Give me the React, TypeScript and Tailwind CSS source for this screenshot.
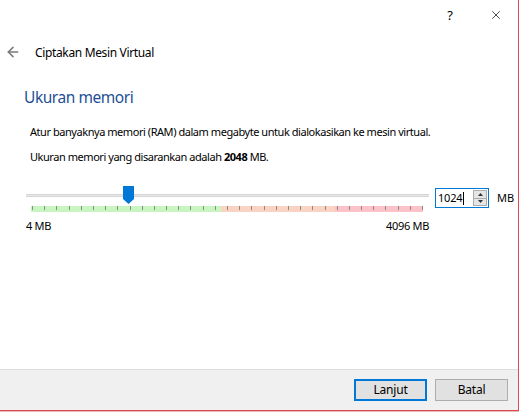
import { ArrowLeft, X } from "lucide-react";

const font = { fontFamily: '"Noto Sans", "Open Sans", sans-serif' };

// slider geometry: bar runs from 4 MB to 4096 MB, one tick every 128 MB
const TICKS = Array.from({ length: 33 }, (_, i) => i);

function MemorySlider() {
  const barWidth = 392;
  const value = 1024;
  const pos = 5 + ((value - 4) / (4096 - 4)) * barWidth;

  return (
    <div className="w-[403px]">
      <div className="relative h-[28px]">
        {/* groove */}
        <div className="absolute left-0 right-0 top-[8px] h-[3px] bg-[#e7e7e7] border-y border-[#d6d6d6]" />
        {/* tick bar */}
        <div className="absolute left-[5px] top-[20px] h-[6px] w-[392px] flex">
          <div className="w-[190px] bg-[#c8f5c0]" />
          <div className="w-[114px] bg-[#fbd3c3]" />
          <div className="flex-1 bg-[#fbc3c7]" />
        </div>
        {TICKS.map((i) => (
          <div
            key={i}
            className="absolute top-[20px] h-[4px] w-px bg-[#8a8a8a]"
            style={{ left: 6 + (i * (barWidth - 2)) / 32 }}
          />
        ))}
        {/* handle */}
        <svg
          className="absolute top-0"
          style={{ left: pos - 5.5 }}
          width="11"
          height="18"
          viewBox="0 0 11 18"
        >
          <path d="M0 0 H11 V13 L5.5 18 L0 13 Z" fill="#0078d7" />
        </svg>
      </div>
      <div className="flex justify-between text-[11px] leading-[14px] tracking-[-0.3px] text-black mt-[5px]">
        <span>4 MB</span>
        <span>4096 MB</span>
      </div>
    </div>
  );
}

function SpinBox() {
  return (
    <div className="flex items-center mt-[2px]">
      <div className="w-[54px] h-[20px] border border-[#0078d7] flex items-center pl-[2px] pr-[1px] bg-white">
        <span className="text-[11px] leading-[14px] tracking-[-0.2px]">1024</span>
        <span className="w-px h-[13px] bg-black ml-px" />
        <div className="ml-auto flex flex-col w-[14px] h-[16px] border border-[#acacac] bg-[#e5e5e5]">
          <div className="flex-1 flex items-center justify-center border-b border-[#acacac]">
            <svg width="5" height="3" viewBox="0 0 5 3">
              <path d="M2.5 0 L5 3 H0 Z" fill="#333" />
            </svg>
          </div>
          <div className="flex-1 flex items-center justify-center">
            <svg width="5" height="3" viewBox="0 0 5 3">
              <path d="M0 0 H5 L2.5 3 Z" fill="#333" />
            </svg>
          </div>
        </div>
      </div>
      <span className="ml-[8px] text-[11px] leading-[14px]">MB</span>
    </div>
  );
}

export default function App() {
  return (
    <div className="w-[519px] h-[412px] bg-[#e9b8bb] text-black" style={font}>
      <div className="w-[519px] h-[411px] bg-white border-r border-b border-[#df4a52] flex flex-col">
        {/* title bar */}
        <div className="h-[30px] flex justify-end items-center shrink-0">
          <button className="w-[46px] h-[30px] flex items-center justify-center text-[13px] leading-none">
            ?
          </button>
          <button className="w-[45px] h-[30px] flex items-center justify-center">
            <X size={14} strokeWidth={1.2} />
          </button>
        </div>

        {/* header */}
        <div className="h-[44px] flex items-center shrink-0">
          <ArrowLeft size={16} strokeWidth={2.3} className="ml-[5px] text-[#7a7a7a]" />
          <span className="ml-[14px] text-[12px] leading-[16px] tracking-[-0.35px] mt-[2px]">
            Ciptakan Mesin Virtual
          </span>
        </div>

        {/* content */}
        <div className="flex-1 pl-[24px]">
          <h1 className="text-[15.5px] leading-[20px] tracking-[-0.45px] text-[#1e4f94] mt-[13px]">
            Ukuran memori
          </h1>
          <p className="ml-[6px] mt-[17px] text-[11px] leading-[16px] tracking-[-0.45px]">
            Atur banyaknya memori (RAM) dalam megabyte untuk dialokasikan ke mesin virtual.
          </p>
          <p className="ml-[6px] mt-[9px] text-[11px] leading-[16px] tracking-[-0.45px]">
            Ukuran memori yang disarankan adalah <b>2048</b> MB.
          </p>
          <div className="flex items-start gap-[6px] ml-[2px] mt-[21px]">
            <MemorySlider />
            <SpinBox />
          </div>
        </div>

        {/* footer */}
        <div className="h-[41px] shrink-0 bg-[#f0f0f0] border-t border-[#dfdfdf] flex items-center justify-end gap-[8px] pr-[10px]">
          <button className="w-[73px] h-[22px] bg-[#e1e1e1] border-2 border-[#0078d7] text-[12px] leading-none tracking-[-0.2px]">
            Lanjut
          </button>
          <button className="w-[73px] h-[22px] bg-[#e1e1e1] border border-[#adadad] text-[12px] leading-none tracking-[-0.2px]">
            Batal
          </button>
        </div>
      </div>
    </div>
  );
}
